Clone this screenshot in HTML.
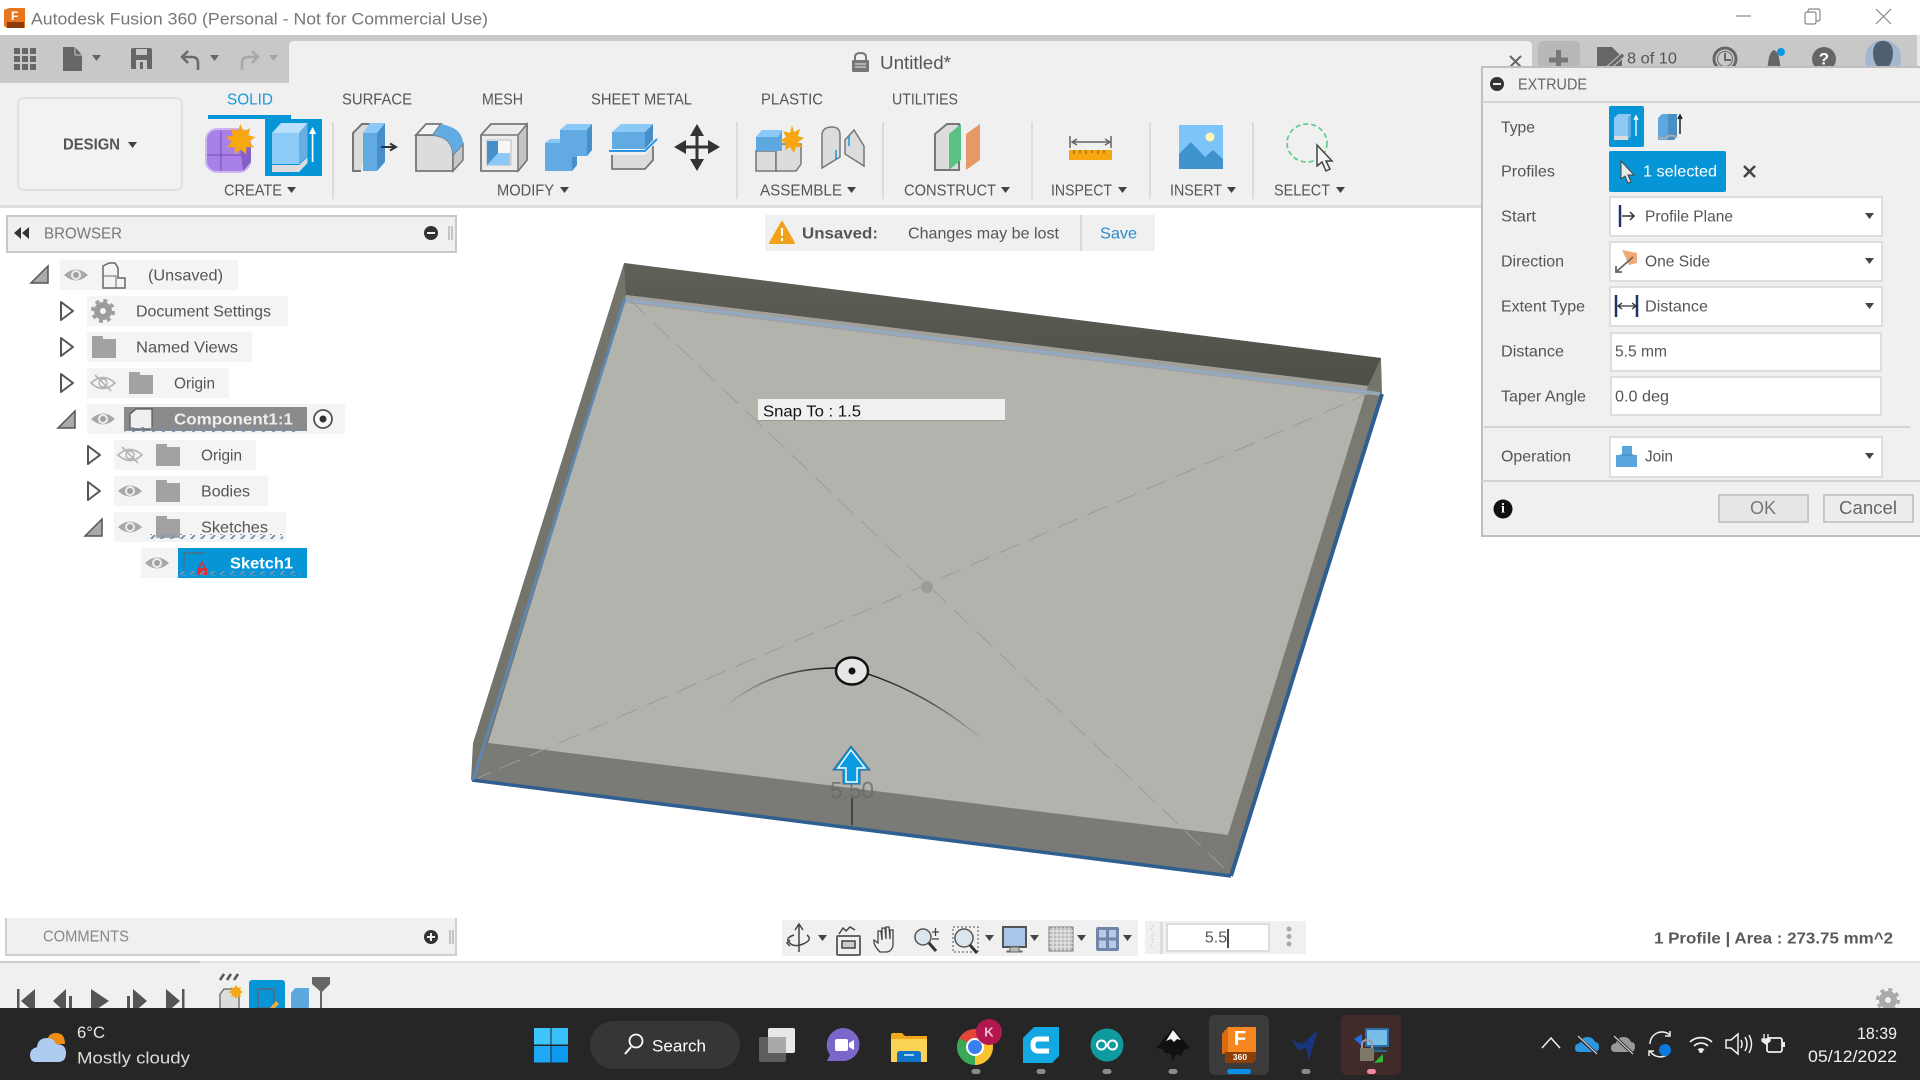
<!DOCTYPE html>
<html lang="en">
<head>
<meta charset="utf-8">
<title>Autodesk Fusion 360</title>
<style>
html,body{margin:0;padding:0;width:1920px;height:1080px;overflow:hidden;background:#fff}
svg{display:block;position:absolute;left:0;top:0;filter:blur(.35px)}
text{font-family:"Liberation Sans",Arial,sans-serif;dominant-baseline:central;fill:#555;font-size:16px;transform:translateY(1px)}
.r{fill:#555}
.w{fill:#fff}
.row{fill:#f4f4f4}
.div{fill:#dcdcdc}
.dd{fill:#fff;stroke:#dedede;stroke-width:2}
.cr{fill:#444}
</style>
</head>
<body>
<svg width="1920" height="1080" viewBox="0 0 1920 1080" xmlns="http://www.w3.org/2000/svg">
<defs>
<path id="caret" d="M0 0h9l-4.500 6z"/>
<g id="eye"><path d="M-12 0Q0-11 12 0Q0 11-12 0z" fill="#a8a8a8"/><circle r="5" fill="#eee"/><circle r="3" fill="#a0a0a0"/></g>
<g id="eyeoff"><path d="M-12 0Q0-11 12 0Q0 11-12 0z" fill="none" stroke="#b4b4b4" stroke-width="1.600"/><circle r="4" fill="none" stroke="#b4b4b4" stroke-width="1.500"/><path d="M-8-8L8 8" stroke="#b4b4b4" stroke-width="1.600"/></g>
<path id="folder" d="M0 0h11v3h13v19H0z" fill="#a2a2a2"/>
<path id="chev" d="M1 1L13 10L1 19z" fill="#fafafa" stroke="#555" stroke-width="2" stroke-linejoin="round"/>
<g id="tri"><path d="M0 17L17 0V17z" fill="#aaa" stroke="#555" stroke-width="1.500"/></g>
<linearGradient id="back" x1="0" y1="0" x2="0" y2="1"><stop offset="0" stop-color="#605f58"/><stop offset="1" stop-color="#4f4e47"/></linearGradient>
<linearGradient id="arcL" gradientUnits="userSpaceOnUse" x1="725" y1="0" x2="836" y2="0"><stop offset="0" stop-color="#222" stop-opacity="0"/><stop offset=".5" stop-color="#222" stop-opacity=".6"/><stop offset="1" stop-color="#111"/></linearGradient>
<linearGradient id="arcR" gradientUnits="userSpaceOnUse" x1="868" y1="0" x2="983" y2="0"><stop offset="0" stop-color="#111"/><stop offset=".55" stop-color="#222" stop-opacity=".7"/><stop offset="1" stop-color="#222" stop-opacity="0"/></linearGradient>
<pattern id="sq" width="10" height="5" patternUnits="userSpaceOnUse"><path d="M0 5L5 0" stroke="#7792b0" stroke-width="2"/></pattern>
<clipPath id="tb"><rect x="0" y="0" width="1920" height="1008"/></clipPath>
<clipPath id="top"><rect x="1480" y="35" width="440" height="31"/></clipPath>
</defs>

<!-- title bar -->
<rect width="1920" height="35" fill="#fff"/>
<path d="M4 10L9 8h16v20H7l-3-2z" fill="#e8761f"/><rect x="7" y="22" width="17" height="6" fill="#8a3d0e"/><text x="11" y="15" class="w" style="font-size:12px;font-weight:bold">F</text>
<text x="31" y="18" fill="#777" style="fill:#777;font-size:17px" textLength="457" lengthAdjust="spacingAndGlyphs">Autodesk Fusion 360 (Personal - Not for Commercial Use)</text>
<path d="M1736 16h15" stroke="#888" stroke-width="1.200"/>
<rect x="1805" y="12" width="11" height="12" rx="2" fill="none" stroke="#888" stroke-width="1.200"/><path d="M1808 12v-1q0-2 2-2h8q2 0 2 2v8q0 2-2 2h-2" fill="none" stroke="#888" stroke-width="1.200"/>
<path d="M1876 9l15 15M1891 9l-15 15" stroke="#888" stroke-width="1.200"/>

<!-- app bar -->
<rect y="35" width="1920" height="48" fill="#c8c8c8"/>
<rect x="1917" y="35" width="3" height="48" fill="#e8e8e8"/>
<path d="M289 83V46q0-5 5-5h1233q5 0 5 5v37z" fill="#f0f0f0"/>
<g fill="#666">
<rect x="14" y="48" width="6" height="6"/><rect x="22" y="48" width="6" height="6"/><rect x="30" y="48" width="6" height="6"/>
<rect x="14" y="56" width="6" height="6"/><rect x="22" y="56" width="6" height="6"/><rect x="30" y="56" width="6" height="6"/>
<rect x="14" y="64" width="6" height="6"/><rect x="22" y="64" width="6" height="6"/><rect x="30" y="64" width="6" height="6"/>
<path d="M63 47h12l7 8v16H63z"/><use href="#caret" x="92" y="55"/>
<path d="M131 50q0-2 2-2h17q2 0 2 2v19h-21z"/>
<use href="#caret" x="210" y="55"/>
</g>
<path d="M75 47v8h7" fill="none" stroke="#c8c8c8" stroke-width="1"/>
<rect x="136" y="49" width="11" height="6" fill="#c8c8c8"/><rect x="136" y="60" width="11" height="9" fill="#c8c8c8"/><rect x="140" y="62" width="3" height="7" fill="#666"/>
<path d="M198 70v-7q0-6-6-6h-8M188 51l-6 6 6 6" fill="none" stroke="#6a6a6a" stroke-width="2.500"/>
<path d="M242 70v-7q0-6 6-6h8M252 51l6 6-6 6" fill="none" stroke="#a8a8a8" stroke-width="2.500"/>
<use href="#caret" x="269" y="55" fill="#a4a4a4"/>

<!-- doc title -->
<path d="M855 61v-4q0-4 5.500-4t5.500 4v4" fill="none" stroke="#777" stroke-width="2"/><rect x="852" y="60" width="17" height="12" rx="1" fill="#777"/><path d="M855 64h11M855 67h11" stroke="#eee"/>
<text x="880" y="62" style="font-size:18px;fill:#555" textLength="71" lengthAdjust="spacingAndGlyphs">Untitled*</text>
<path d="M1510 56l11 11M1521 56l-11 11" stroke="#666" stroke-width="2"/>
<g clip-path="url(#top)">
<rect x="1538" y="41" width="42" height="30" rx="5" fill="#b8b8b8"/><path d="M1549 60h19M1558.500 50v20" stroke="#777" stroke-width="5"/>
<path d="M1597 47h15l10 10v20h-25z" fill="#666"/><path d="M1604 69l18-16 3 3-18 16z" fill="#666" stroke="#c8c8c8"/>
<text x="1627" y="58" style="font-size:16px" textLength="50" lengthAdjust="spacingAndGlyphs">8 of 10</text>
<circle cx="1725" cy="59" r="11" fill="#c8c8c8" stroke="#666" stroke-width="3"/><circle cx="1725" cy="59" r="7.500" fill="none" stroke="#666" stroke-width="1"/><path d="M1725 53v7h6" fill="none" stroke="#666" stroke-width="2"/>
<path d="M1764 72q3-3 4-8 1-12 6-14 5 2 6 14 1 5 4 8z" fill="#666"/><circle cx="1781" cy="52" r="4" fill="#0b97e0"/>
<circle cx="1824" cy="59" r="12" fill="#666"/><text x="1824" y="58" text-anchor="middle" class="w" style="font-size:17px;font-weight:bold">?</text>
<circle cx="1883" cy="58" r="18" fill="#a3b6cf"/><path d="M1873 52q1-11 10-11t10 11q0 10-5 15h-10q-5-5-5-15z" fill="#505f70"/>
</g>

<!-- ribbon -->
<rect y="83" width="1920" height="122" fill="#f0f0f0"/>
<rect y="205" width="1920" height="3" fill="#dedede"/>
<rect x="18" y="98" width="164" height="92" rx="6" fill="#f2f2f2" stroke="#e0e0e0" stroke-width="2"/>
<text x="63" y="144" style="font-size:16px;font-weight:bold;fill:#555" textLength="57" lengthAdjust="spacingAndGlyphs">DESIGN</text><use href="#caret" x="128" y="142" class="cr"/>
<text x="227" y="99" style="font-size:15.500px;fill:#1a9ad8" textLength="46" lengthAdjust="spacingAndGlyphs">SOLID</text>
<text x="342" y="99" style="font-size:15.500px" textLength="70" lengthAdjust="spacingAndGlyphs">SURFACE</text>
<text x="482" y="99" style="font-size:15.500px" textLength="41" lengthAdjust="spacingAndGlyphs">MESH</text>
<text x="591" y="99" style="font-size:15.500px" textLength="101" lengthAdjust="spacingAndGlyphs">SHEET METAL</text>
<text x="761" y="99" style="font-size:15.500px" textLength="62" lengthAdjust="spacingAndGlyphs">PLASTIC</text>
<text x="892" y="99" style="font-size:15.500px" textLength="66" lengthAdjust="spacingAndGlyphs">UTILITIES</text>
<rect x="208" y="115" width="83" height="4" fill="#0696d7"/>
<rect x="265" y="119" width="57" height="57" fill="#0696d7"/>

<!-- create solid purple -->
<rect x="206" y="129" width="44" height="43" rx="11" fill="#a97fe8" stroke="#cfb6f3" stroke-width="2"/>
<path d="M207 155h36M221 131v40" stroke="#7a55c0" stroke-width="1.200"/><path d="M240 147l11-5v20l-8 9z" fill="#8560c8"/>
<path d="M240.500 124l2.800 7.200 7-3-2.200 7.300 7.400 1.500-6.200 4.500 4.800 6-7.600-.5-.4 7.500-5.600-5-5.600 5-.4-7.500-7.600.5 4.800-6-6.200-4.500 7.400-1.500-2.200-7.300 7 3z" fill="#f7a80f"/>
<!-- extrude -->
<path d="M272 133L281 123H307.500L299 133z" fill="#b8dffb"/><rect x="272" y="133" width="27" height="31" fill="#8ccbf8"/><path d="M299 133L307.500 123V156L299 164z" fill="#68aee3"/>
<path d="M272 165H299L307.500 157V163L299 172H272z" fill="#dcdcdc"/>
<path d="M312.600 162V128" stroke="#fff" stroke-width="1.700"/><path d="M309 134l3.600-7 3.600 7z" fill="#fff"/>
<text x="224" y="190" style="font-size:15.500px" textLength="58" lengthAdjust="spacingAndGlyphs">CREATE</text><use href="#caret" x="287" y="187" class="cr"/>
<rect x="332" y="122" width="2" height="77" class="div"/>

<!-- modify icons -->
<path d="M361 171H353V133L362 124H372" fill="#dcdcdc" stroke="#777" stroke-width="2"/>
<rect x="363" y="133" width="14" height="38" fill="#62aae2"/><path d="M363 133L370 123H385L377 133z" fill="#8cc9f6"/><path d="M377 133L385 123V162L377 171z" fill="#4590cb"/>
<path d="M381 147H394M390 143.500L396 147L390 150.500" fill="none" stroke="#333" stroke-width="2"/>
<path d="M416 171V135H433Q453 137 453 155V171z" fill="#dcdcdc" stroke="#777" stroke-width="1.800"/>
<path d="M416 135L426 124H441L433 135z" fill="#f4f4f4" stroke="#777" stroke-width="1.800"/>
<path d="M453 171V155L463 144V160z" fill="#c8c8c8" stroke="#777" stroke-width="1.500"/>
<path d="M433 135L441 124Q463 128 463 144L453 155Q452 137 433 135z" fill="#62aae2"/>
<path d="M481 171V135L491 124H527V160L518 171z" fill="#ececec" stroke="#777" stroke-width="1.800"/>
<path d="M518 135L527 124V160L518 171z" fill="#c4c4c4" stroke="#777" stroke-width="1.500"/><path d="M481 135H518" stroke="#777" stroke-width="1.500"/>
<rect x="487" y="140" width="24" height="25" fill="#f7f7f7" stroke="#bbb"/><rect x="487" y="141" width="11" height="24" fill="#4590cb"/><path d="M487 165L498 153H510V165z" fill="#8cc9f6"/>
<path d="M545 143L550 139H560V130L567 124H592V150L587 156H577V165L572 171H545z" fill="#62aae2"/>
<path d="M545 143L550 139H560V143z" fill="#8cc9f6"/><path d="M560 130L567 124H592L587 130z" fill="#8cc9f6"/><path d="M587 130L592 124V150L587 156z" fill="#4590cb"/><path d="M572 157H577V165L572 171z" fill="#4590cb"/>
<rect x="612" y="132" width="33" height="17" fill="#62aae2"/><path d="M612 132L621 124H653L645 132z" fill="#8cc9f6"/><path d="M645 132L653 124V140L645 149z" fill="#4590cb"/>
<path d="M609 151H645L657 139" fill="none" stroke="#2a96e6" stroke-width="2"/>
<path d="M612 155V169H645L653 160V146L645 155z" fill="#dcdcdc"/><path d="M612 155V169H645L653 160V146" fill="none" stroke="#777" stroke-width="1.800"/>
<path d="M697 130V165M680 147H714" stroke="#333" stroke-width="3"/>
<path d="M697 124L704 136H690zM697 171L704 159H690zM674 147L686 140V154zM720 147L708 140V154z" fill="#333"/>
<text x="497" y="190" style="font-size:15.500px" textLength="57" lengthAdjust="spacingAndGlyphs">MODIFY</text><use href="#caret" x="560" y="187" class="cr"/>
<rect x="736" y="122" width="2" height="77" class="div"/>

<!-- assemble -->
<path d="M756 171v-20h20v20z" fill="#dcdcdc" stroke="#777" stroke-width="1.500"/><path d="M776 171v-20l6-7h19v20l-5 7z" fill="#dcdcdc" stroke="#777" stroke-width="1.500"/>
<path d="M756 137l6-7h20v21h-26z" fill="#5ea8e0"/><path d="M756 137l6-7h20l-4 7z" fill="#8cc9f6"/>
<path d="M792 125l2 7 6-3-2 7 6 2-6 4 5 5-7 0-2 6-4-6-5 3 1-7-6-2 6-4-3-6 7 2z" fill="#f5a611"/>
<path d="M822 168v-34q1-7 10-7 8 0 8 8v22z" fill="#dcdcdc" stroke="#777" stroke-width="1.500"/><path d="M845 140l9-10 10 16v20l-19-12z" fill="#dcdcdc" stroke="#777" stroke-width="1.500"/><path d="M836 150v10M849 136v10" stroke="#1f96dc" stroke-width="1.500"/>
<rect x="882" y="122" width="2" height="77" class="div"/>
<text x="760" y="190" style="font-size:15.500px" textLength="82" lengthAdjust="spacingAndGlyphs">ASSEMBLE</text><use href="#caret" x="847" y="187" class="cr"/>

<!-- construct -->
<path d="M935 170v-36l12-10h12v46z" fill="#dcdcdc" stroke="#777" stroke-width="2"/><path d="M949 170v-36l12-10v36z" fill="#58c282"/><path d="M966 170v-36l14-10v36z" fill="#e39a66"/>
<text x="904" y="190" style="font-size:15.500px" textLength="92" lengthAdjust="spacingAndGlyphs">CONSTRUCT</text><use href="#caret" x="1001" y="187" class="cr"/>
<rect x="1031" y="122" width="2" height="77" class="div"/>

<!-- inspect -->
<path d="M1070 136v12M1111 136v12M1072 142h38M1077 139l-5 3 5 3M1105 139l5 3-5 3" fill="none" stroke="#666" stroke-width="1.500"/>
<rect x="1069" y="150" width="43" height="10" fill="#f5a611"/><path d="M1074 150v4M1080 150v3M1086 150v4M1092 150v3M1098 150v4M1104 150v3" stroke="#7a5a10" stroke-width="1"/>
<text x="1051" y="190" style="font-size:15.500px" textLength="61" lengthAdjust="spacingAndGlyphs">INSPECT</text><use href="#caret" x="1118" y="187" class="cr"/>
<rect x="1149" y="122" width="2" height="77" class="div"/>

<!-- insert -->
<rect x="1179" y="125" width="44" height="44" fill="#7dc4fb"/><circle cx="1210" cy="137" r="4.500" fill="#fbf6b2"/><path d="M1179 154l12-12 14 15 8-7 10 9v10h-44z" fill="#3e93cc"/>
<text x="1170" y="190" style="font-size:15.500px" textLength="52" lengthAdjust="spacingAndGlyphs">INSERT</text><use href="#caret" x="1227" y="187" class="cr"/>
<rect x="1252" y="122" width="2" height="77" class="div"/>

<!-- select -->
<ellipse cx="1307" cy="143" rx="20" ry="19" fill="none" stroke="#5fcc8a" stroke-width="1.700" stroke-dasharray="5 3"/>
<path d="M1317 145v21l5-4 4 9 4-2-4-8h6z" fill="#f4f4f4" stroke="#444" stroke-width="1.500"/>
<text x="1274" y="190" style="font-size:15.500px" textLength="56" lengthAdjust="spacingAndGlyphs">SELECT</text><use href="#caret" x="1336" y="187" class="cr"/>

<!-- browser -->
<rect x="7" y="216" width="449" height="36" fill="#f0f0f0" stroke="#c8c8c8" stroke-width="2"/>
<path d="M21 227v12l-7-6zM29 227v12l-7-6z" fill="#333"/>
<text x="44" y="233" style="font-size:16px;fill:#777" textLength="78" lengthAdjust="spacingAndGlyphs">BROWSER</text>
<circle cx="431" cy="233" r="7" fill="#333"/><rect x="427" y="232" width="8" height="2" fill="#f0f0f0"/>
<path d="M449 226v14M452 226v14" stroke="#999"/>

<rect x="60" y="260" width="178" height="30" class="row"/>
<use href="#tri" x="31" y="266"/><use href="#eye" x="76" y="275"/>
<path d="M103 266l6-3h6l3 5v10h7v10h-22z" fill="#f4f4f4" stroke="#666" stroke-width="1.500"/><path d="M103 276h13v12" fill="none" stroke="#666" stroke-width="1"/>
<text x="148" y="275" textLength="75" lengthAdjust="spacingAndGlyphs">(Unsaved)</text>

<rect x="87" y="296" width="201" height="30" class="row"/>
<use href="#chev" x="60" y="301"/>
<circle cx="103" cy="311" r="9" fill="#9c9c9c"/><circle cx="103" cy="311" r="3" fill="#f4f4f4"/><circle cx="103" cy="311" r="10.500" fill="none" stroke="#9c9c9c" stroke-width="3" stroke-dasharray="4 4.250"/>
<text x="136" y="311" textLength="135" lengthAdjust="spacingAndGlyphs">Document Settings</text>

<rect x="87" y="332" width="165" height="30" class="row"/>
<use href="#chev" x="60" y="337"/><use href="#folder" x="92" y="336"/>
<text x="136" y="347" textLength="102" lengthAdjust="spacingAndGlyphs">Named Views</text>

<rect x="87" y="368" width="142" height="30" class="row"/>
<use href="#chev" x="60" y="373"/><use href="#eyeoff" x="103" y="383"/><use href="#folder" x="129" y="372"/>
<text x="174" y="383" textLength="41" lengthAdjust="spacingAndGlyphs">Origin</text>

<rect x="87" y="404" width="258" height="30" class="row"/>
<use href="#tri" x="58" y="411"/><use href="#eye" x="103" y="419"/>
<rect x="124" y="407" width="183" height="24" fill="#8b8b8b"/>
<path d="M130 414l6-5h16v20h-22z" fill="#efefef" stroke="#555" stroke-width="1.200"/>
<text x="174" y="419" class="w" style="font-weight:bold;fill:#eee" textLength="119" lengthAdjust="spacingAndGlyphs">Component1:1</text>
<rect x="124" y="427" width="177" height="5" fill="url(#sq)"/>
<circle cx="323" cy="419" r="9" fill="#fafafa" stroke="#555" stroke-width="1.800"/><circle cx="323" cy="419" r="3.500" fill="#333"/>

<rect x="114" y="440" width="142" height="30" class="row"/>
<use href="#chev" x="87" y="445"/><use href="#eyeoff" x="130" y="455"/><use href="#folder" x="156" y="444"/>
<text x="201" y="455" textLength="41" lengthAdjust="spacingAndGlyphs">Origin</text>

<rect x="114" y="476" width="154" height="30" class="row"/>
<use href="#chev" x="87" y="481"/><use href="#eye" x="130" y="491"/><use href="#folder" x="156" y="480"/>
<text x="201" y="491" textLength="49" lengthAdjust="spacingAndGlyphs">Bodies</text>

<rect x="114" y="512" width="172" height="30" class="row"/>
<use href="#tri" x="85" y="519"/><use href="#eye" x="130" y="527"/><use href="#folder" x="156" y="516"/>
<text x="201" y="527" textLength="67" lengthAdjust="spacingAndGlyphs">Sketches</text>
<rect x="150" y="534" width="133" height="5" fill="url(#sq)"/>

<rect x="141" y="548" width="166" height="30" class="row"/>
<use href="#eye" x="157" y="563"/>
<rect x="178" y="548" width="129" height="30" fill="#0696d7"/>
<path d="M184 553h22M184 553v20" stroke="#4a6a80" stroke-width="1.500" stroke-dasharray="3 1"/><path d="M197 568h10v7h-10z" fill="#d8303a"/><path d="M199 568l3-6 3 6" fill="none" stroke="#d8303a" stroke-width="1.500"/>
<text x="230" y="563" class="w" style="font-weight:bold" textLength="63" lengthAdjust="spacingAndGlyphs">Sketch1</text>
<rect x="178" y="571" width="123" height="5" fill="url(#sq)"/>

<!-- unsaved banner -->
<rect x="765" y="215" width="390" height="36" fill="#f0f0f0"/>
<path d="M782 222l12 21h-24z" fill="#f0a31a" stroke="#f0a31a" stroke-width="2" stroke-linejoin="round"/><path d="M782 228v8M782 238v3" stroke="#fff" stroke-width="2"/>
<text x="802" y="233" style="font-weight:bold" textLength="76" lengthAdjust="spacingAndGlyphs">Unsaved:</text>
<text x="908" y="233" textLength="151" lengthAdjust="spacingAndGlyphs">Changes may be lost</text>
<rect x="1080" y="215" width="2" height="36" fill="#d8d8d8"/>
<text x="1100" y="233" style="fill:#2a8ac8" textLength="37" lengthAdjust="spacingAndGlyphs">Save</text>

<!-- 3D model -->
<path d="M624 263L1381 358L1382 393L1231 876L471 780L473 743z" fill="#75746c"/>
<path d="M624 263L1381 358L1368 386L626 295z" fill="url(#back)"/>
<path d="M626 295L1368 386L1228 835L488 743z" fill="#b3b3ad"/>
<path d="M626 295L1368 386L1366 395L626 303z" fill="#a19f99"/>
<path d="M488 743L1228 835L1230 876L472 780z" fill="#7a7b76"/>
<path d="M1228 835L1368 386L1382 393L1231 876z" fill="#7b7a72"/>
<path d="M626 300L1380 394" stroke="#93a9c1" stroke-width="3.500"/>
<path d="M472 780L1231 876" stroke="#2f5e90" stroke-width="3.500"/>
<path d="M1231 876L1382 394" stroke="#2f5e90" stroke-width="4"/>
<path d="M473 780L625 298" stroke="#5e87b0" stroke-width="3"/>
<g stroke="#9c9c96" stroke-width="1" stroke-dasharray="22 10" fill="none">
<path d="M630 300L1228 872"/><path d="M1372 392L478 778"/>
</g>
<circle cx="927" cy="587" r="6" fill="#9c9c96"/>
<path d="M725 707Q770 668 836 668" fill="none" stroke="url(#arcL)" stroke-width="1.400"/>
<path d="M868 674Q930 695 983 740" fill="none" stroke="url(#arcR)" stroke-width="1.400"/>
<ellipse cx="852" cy="671" rx="16" ry="13.500" fill="#e6e6e6" stroke="#111" stroke-width="2.500"/><circle cx="852" cy="671" r="3.500" fill="#111"/>
<text x="852" y="790" text-anchor="middle" style="font-size:24px;fill:#666;opacity:.75" textLength="44" lengthAdjust="spacingAndGlyphs">5.50</text>
<path d="M852 798v27" stroke="#222" stroke-width="1.200"/>
<path d="M851 746L870 770H860V784H843V770H833z" fill="#0a9ae2" stroke="#3c6a92" stroke-width="1"/>
<path d="M851 750L865 768H857V782H846V768H838z" fill="#0a9ae2" stroke="#fff" stroke-width="1.400"/>
<rect x="758" y="399" width="247" height="22" fill="#f0f0f0"/><rect x="758" y="420" width="247" height="1" fill="#999"/>
<text x="763" y="411" style="fill:#111" textLength="98" lengthAdjust="spacingAndGlyphs">Snap To : 1.5</text>

<!-- extrude panel -->
<rect x="1482" y="67" width="440" height="469" fill="#f0f0f0" stroke="#bfbfbf" stroke-width="2"/>
<rect x="1482" y="101" width="438" height="2" fill="#d4d4d4"/>
<circle cx="1497" cy="84" r="7" fill="#333"/><rect x="1493" y="83" width="8" height="2" fill="#f0f0f0"/>
<text x="1518" y="84" style="fill:#666" textLength="69" lengthAdjust="spacingAndGlyphs">EXTRUDE</text>
<text x="1501" y="127" textLength="34" lengthAdjust="spacingAndGlyphs">Type</text>
<text x="1501" y="171" textLength="54" lengthAdjust="spacingAndGlyphs">Profiles</text>
<text x="1501" y="216" textLength="35" lengthAdjust="spacingAndGlyphs">Start</text>
<text x="1501" y="261" textLength="63" lengthAdjust="spacingAndGlyphs">Direction</text>
<text x="1501" y="306" textLength="84" lengthAdjust="spacingAndGlyphs">Extent Type</text>
<text x="1501" y="351" textLength="63" lengthAdjust="spacingAndGlyphs">Distance</text>
<text x="1501" y="396" textLength="85" lengthAdjust="spacingAndGlyphs">Taper Angle</text>
<text x="1501" y="456" textLength="70" lengthAdjust="spacingAndGlyphs">Operation</text>

<rect x="1609" y="106" width="35" height="41" rx="2" fill="#0696d7"/>
<path d="M1614 118l4-4h13v22l-3 4h-14z" fill="#8cc9f6"/><path d="M1628 118l3-4v22l-3 4z" fill="#5ea8e0"/><path d="M1614 136h14v4h-14z" fill="#dcdcdc"/><path d="M1636 136v-19M1634 120l2-4 2 4" fill="none" stroke="#fff" stroke-width="1.300"/>
<path d="M1658 118l4-4h15v22l-3 4h-16z" fill="#5ea8e0"/><path d="M1668 114h9v22l-3 4h-6z" fill="#4a8ec6"/><path d="M1658 137q5 3 9 0t10 0" fill="none" stroke="#aaa" stroke-width="2"/><path d="M1680 134v-19M1678 119l2-4 2 4" fill="none" stroke="#222" stroke-width="1.500"/>
<rect x="1609" y="151" width="117" height="41" rx="2" fill="#0696d7"/>
<path d="M1621 161v18l4-3 3 7 3-1-3-7h6z" fill="#e8e8e8" stroke="#444"/>
<text x="1643" y="171" class="w" style="font-size:16px" textLength="74" lengthAdjust="spacingAndGlyphs">1 selected</text>
<path d="M1744 166l11 11M1755 166l-11 11" stroke="#444" stroke-width="2.500"/>

<rect x="1610" y="197" width="272" height="39" class="dd"/>
<path d="M1620 205v22" stroke="#1c3564" stroke-width="2.500"/><path d="M1622 216h11M1630 212l4 4-4 4" fill="none" stroke="#333" stroke-width="1.500"/>
<text x="1645" y="216" textLength="88" lengthAdjust="spacingAndGlyphs">Profile Plane</text><use href="#caret" x="1865" y="213" class="cr"/>

<rect x="1610" y="242" width="272" height="39" class="dd"/>
<path d="M1622 250l15 3v10l-8 2z" fill="#f0aa78" /><path d="M1616 272l17-15M1616 266v6h6" fill="none" stroke="#666" stroke-width="1.800"/>
<text x="1645" y="261" textLength="65" lengthAdjust="spacingAndGlyphs">One Side</text><use href="#caret" x="1865" y="258" class="cr"/>

<rect x="1610" y="287" width="272" height="39" class="dd"/>
<path d="M1616 295v22M1637 295v22" stroke="#1c3564" stroke-width="2.500"/><path d="M1618 306h18M1622 303l-4 3 4 3M1632 303l4 3-4 3" fill="none" stroke="#333" stroke-width="1.300"/>
<text x="1645" y="306" textLength="63" lengthAdjust="spacingAndGlyphs">Distance</text><use href="#caret" x="1865" y="303" class="cr"/>

<rect x="1611" y="333" width="270" height="38" fill="#fff" stroke="#dedede" stroke-width="2"/>
<text x="1615" y="351" textLength="52" lengthAdjust="spacingAndGlyphs">5.5 mm</text>
<rect x="1611" y="377" width="270" height="38" fill="#fff" stroke="#dedede" stroke-width="2"/>
<text x="1615" y="396" textLength="54" lengthAdjust="spacingAndGlyphs">0.0 deg</text>
<rect x="1484" y="426" width="426" height="2" fill="#d4d4d4"/>

<rect x="1610" y="437" width="272" height="40" class="dd"/>
<path d="M1622 446h10v9h5v12h-21v-12h6z" fill="#5aa5de"/><path d="M1620 455h14" stroke="#3f86c2"/>
<text x="1645" y="456" textLength="28" lengthAdjust="spacingAndGlyphs">Join</text><use href="#caret" x="1865" y="453" class="cr"/>

<rect x="1482" y="480" width="438" height="2" fill="#d4d4d4"/>
<circle cx="1503" cy="509" r="9.500" fill="#111"/><text x="1503" y="508" text-anchor="middle" class="w" style="font-size:14px;font-weight:bold;font-family:'Liberation Serif',serif">i</text>
<rect x="1719" y="495" width="89" height="27" fill="#e6e6e6" stroke="#c8c8c8" stroke-width="2"/>
<text x="1763" y="507" text-anchor="middle" style="font-size:18px;fill:#777">OK</text>
<rect x="1824" y="495" width="89" height="27" fill="#ededed" stroke="#c8c8c8" stroke-width="2"/>
<text x="1868" y="507" text-anchor="middle" style="font-size:18px;fill:#666" textLength="58" lengthAdjust="spacingAndGlyphs">Cancel</text>

<!-- comments -->
<rect x="6" y="918" width="450" height="38" fill="#f0f0f0"/><path d="M6 918V955H456V918" fill="none" stroke="#d0d0d0" stroke-width="2"/>
<text x="43" y="936" style="font-size:15.500px;fill:#888" textLength="86" lengthAdjust="spacingAndGlyphs">COMMENTS</text>
<circle cx="431" cy="937" r="7" fill="#333"/><path d="M427 937h8M431 933v8" stroke="#f0f0f0" stroke-width="2"/>
<path d="M450 930v14M453 930v14" stroke="#999"/>

<!-- nav bar -->
<rect x="782" y="920" width="356" height="36" fill="#f0f0f0"/>
<g fill="none" stroke="#444" stroke-width="1.500">
<path d="M799 924v28M795 930l4-6 4 6"/><path d="M807 935q6 5-4 9t-14-2q-4-4 5-7M790 940l-3 3 3 3"/>
<rect x="837" y="936" width="23" height="19" rx="1" stroke="#666" stroke-width="2"/><rect x="842" y="941" width="13" height="7" fill="#ccc"/><path d="M839 934l4-6 3 3 4-4 5 3"/>
<path d="M880 952q-7-7-6-12l4 3v-12l3 0 1 9v-12h3l1 11v-12h3l1 12v-9h3v16q-2 6-7 6z" stroke-width="1.300"/>
<circle cx="923" cy="937" r="8" fill="#dce6ee" stroke="#555"/><path d="M929 943l7 8" stroke="#333" stroke-width="3"/><path d="M932 932h7M935.500 928v8M932 939h7" stroke-width="1.300"/>
<path d="M953 927h25v25h-25z" stroke="#555" stroke-width="1" stroke-dasharray="2 2"/><circle cx="964" cy="938" r="9" fill="#dce6ee" stroke="#555"/><path d="M970 945l7 8" stroke="#333" stroke-width="3"/>
</g>
<rect x="1003" y="927" width="23" height="20" fill="#a9c6e8" stroke="#555" stroke-width="2"/><path d="M1010 947h9v4h3v1h-15v-1h3z" fill="#bbb" stroke="#666"/>
<rect x="1049" y="927" width="24" height="24" fill="#bbb" stroke="#777"/>
<path d="M1053 927v24M1057 927v24M1061 927v24M1065 927v24M1069 927v24M1049 931h24M1049 935h24M1049 939h24M1049 943h24M1049 947h24" stroke="#eee" stroke-width="1"/>
<rect x="1096" y="927" width="23" height="24" rx="2" fill="#6f86a8"/>
<rect x="1099" y="930" width="7" height="7.500" fill="#b9cbe4"/><rect x="1109" y="930" width="7" height="7.500" fill="#b9cbe4"/><rect x="1099" y="940.500" width="7" height="7.500" fill="#b9cbe4"/><rect x="1109" y="940.500" width="7" height="7.500" fill="#b9cbe4"/>
<g class="cr"><use href="#caret" x="818" y="935"/><use href="#caret" x="985" y="935"/><use href="#caret" x="1030" y="935"/><use href="#caret" x="1077" y="935"/><use href="#caret" x="1123" y="935"/></g>

<rect x="1145" y="921" width="161" height="33" fill="#f0f0f0"/>
<path d="M1153 925l-2 4 3 4-3 4 3 4-3 4 2 4" fill="none" stroke="#ccc" stroke-dasharray="2 2"/><rect x="1160" y="922" width="3" height="32" fill="#ddd"/>
<rect x="1167" y="924" width="102" height="27" fill="#fff" stroke="#dcdcdc" stroke-width="2"/>
<text x="1216" y="937" text-anchor="middle" style="font-size:16px">5.5</text><path d="M1228 929v19" stroke="#111" stroke-width="1.500"/>
<circle cx="1289" cy="929" r="2.500" fill="#aaa"/><circle cx="1289" cy="936.500" r="2.500" fill="#aaa"/><circle cx="1289" cy="944" r="2.500" fill="#aaa"/>

<text x="1654" y="938" style="font-weight:bold;font-size:16px;fill:#5a5a5a" textLength="239" lengthAdjust="spacingAndGlyphs">1 Profile | Area : 273.75 mm^2</text>

<!-- timeline -->
<rect y="963" width="1920" height="45" fill="#f0f0f0"/>
<rect y="961" width="1920" height="2" fill="#e2e2e2"/>
<rect y="961" width="200" height="2" fill="#cdcdcd"/>
<g clip-path="url(#tb)">
<g fill="#555">
<rect x="17" y="989" width="2.500" height="24"/><path d="M35 989v24l-14-12z"/>
<path d="M66 989v24l-13-12z"/><rect x="69" y="996" width="3" height="12"/>
<path d="M91 989l18 12-18 12z"/>
<rect x="127" y="996" width="3" height="12"/><path d="M133 989l14 12-14 12z"/>
<path d="M166 989l14 12-14 12z"/><rect x="182" y="989" width="2.500" height="24"/>
<path d="M220 980l4-6M227 980l4-6M234 980l4-6" stroke="#555" stroke-width="2.500"/>
</g>
<path d="M220 1012v-18l4-5h15v23z" fill="#dcdcdc" stroke="#777" stroke-width="1.500"/>
<path d="M236 985l2 3 3-1-1 3 3 2-3 2 1 3-3-1-2 3-2-3-3 1 1-3-3-2 3-2-1-3 3 1z" fill="#f5a611"/>
<rect x="249" y="980" width="36" height="34" rx="3" fill="#0696d7"/>
<rect x="258" y="989" width="16" height="19" fill="none" stroke="#46708e" stroke-width="2"/><path d="M270 1008l6-7 3 3-6 6z" fill="#f0b040"/>
<path d="M291 1012v-19l4-5h14v19l-4 5z" fill="#5ea8e0"/>
<path d="M312 977h18v7l-8 8-1-0-9-8z" fill="#666"/><rect x="320" y="990" width="2" height="20" fill="#666"/>
<circle cx="1888" cy="1000" r="9" fill="#aaa"/><circle cx="1888" cy="1000" r="3" fill="#f0f0f0"/><circle cx="1888" cy="1000" r="10.500" fill="none" stroke="#aaa" stroke-width="3" stroke-dasharray="4 4.250"/>
</g>

<!-- taskbar -->
<rect y="1008" width="1920" height="72" fill="#262626"/>
<path d="M47 1044q0-11 9-11t9 11z" fill="#ef8c12"/>
<path d="M36 1062q-6 0-6-7 0-6 7-8 1-9 10-9 7 0 9 6 10 0 10 9 0 9-8 9z" fill="#aecbf0"/>
<text x="77" y="1032" style="font-size:16.500px;fill:#e8e8e8" textLength="28" lengthAdjust="spacingAndGlyphs">6°C</text>
<text x="77" y="1057" style="font-size:17px;fill:#dcdcdc" textLength="113" lengthAdjust="spacingAndGlyphs">Mostly cloudy</text>
<rect x="534" y="1028" width="16.500" height="16.500" fill="#3dc6fb"/><rect x="551.500" y="1028" width="16.500" height="16.500" fill="#37c0fb"/><rect x="534" y="1046" width="16.500" height="16.500" fill="#1fa8f5"/><rect x="551.500" y="1046" width="16.500" height="16.500" fill="#0f98f0"/>
<rect x="590" y="1021" width="150" height="48" rx="24" fill="#363636"/>
<circle cx="636" cy="1041" r="6.500" fill="none" stroke="#fff" stroke-width="1.800"/><path d="M631 1047l-6 7" stroke="#fff" stroke-width="2"/>
<text x="652" y="1045" class="w" style="font-size:17px" textLength="54" lengthAdjust="spacingAndGlyphs">Search</text>
<rect x="759" y="1037" width="27" height="25" rx="2" fill="#5e5e5e"/><rect x="768" y="1028" width="27" height="25" rx="2" fill="#e8e8e8"/><rect x="768" y="1037" width="18" height="16" fill="#a9a9a9"/>
<path d="M843 1028a16.500 16.500 0 0 1 0 33h-16l3-6a17 17 0 0 1 13-27z" fill="#7b67c9"/><rect x="835" y="1039" width="13" height="12" rx="2" fill="#fff"/><path d="M849 1043l5-3v10l-5-3z" fill="#fff"/>
<path d="M891 1035q0-2 2-2h9l3 3h22v26h-36z" fill="#f3a81c"/><rect x="891" y="1039" width="36" height="23" fill="#fad355"/><path d="M897 1062v-8q0-3 3-3h18q3 0 3 3v8z" fill="#0f74c8"/><rect x="904" y="1054" width="10" height="2" fill="#9bd2f5"/>
<path d="M975 1047L959.400 1038A18 18 0 0 1 990.600 1038Z" fill="#e2463a"/><path d="M975 1047L990.600 1038A18 18 0 0 1 975 1065Z" fill="#f9c430"/><path d="M975 1047L975 1065A18 18 0 0 1 959.400 1038Z" fill="#3aa856"/>
<circle cx="975" cy="1047" r="9" fill="#fff"/><circle cx="975" cy="1047" r="7" fill="#3a7ff0"/>
<circle cx="989" cy="1032" r="13" fill="#b3174f"/><text x="989" y="1031" text-anchor="middle" style="font-size:13px;fill:#f4c0d0;font-weight:bold">K</text>
<path d="M1023 1038l11-11h25v29l-7 7h-29z" fill="#12a9e2"/><path d="M1049 1039h-11q-5 0-5 6t5 6h11" fill="none" stroke="#fff" stroke-width="5"/>
<circle cx="1107" cy="1045" r="16.500" fill="#0f9aa0"/><circle cx="1101.500" cy="1045" r="4.500" fill="none" stroke="#fff" stroke-width="2"/><circle cx="1112.500" cy="1045" r="4.500" fill="none" stroke="#fff" stroke-width="2"/>
<path d="M1173 1028l17 20-6 2-3 6-5-2-3 7-2-7-6-1-2-4-7-1z" fill="#101010"/><path d="M1173 1030l8 10-4-1-3 3-3-3-5 2z" fill="#f4f4f4"/>
<rect x="1209" y="1015" width="60" height="60" rx="6" fill="#3b3b3b"/>
<path d="M1222 1034l6-7h28v25h-34z" fill="#f58620"/><rect x="1228" y="1027" width="28" height="25" fill="#f58620"/>
<path d="M1222 1034l6-7v26l-6 1z" fill="#d86a10"/>
<path d="M1225 1052h31v7l-3 4h-28z" fill="#8c3f08"/>
<text x="1240" y="1038" text-anchor="middle" class="w" style="font-size:20px;font-weight:bold">F</text>
<text x="1240" y="1056" text-anchor="middle" class="w" style="font-size:8.500px;font-weight:bold">360</text>
<rect x="1227" y="1069" width="24" height="5" rx="2.500" fill="#0a8fe8"/>
<path d="M1292 1040l10 4 16-14-9 30-3-12-8 2z" fill="#17367e"/>
<rect x="1341" y="1015" width="60" height="60" rx="6" fill="#432a2a"/>
<rect x="1365" y="1028" width="24" height="19" fill="#2a6ea8"/><rect x="1367" y="1030" width="20" height="15" fill="#78bde8"/><rect x="1372" y="1047" width="10" height="3" fill="#1e4a70"/><rect x="1368" y="1050" width="19" height="2" fill="#2a6a80"/>
<path d="M1354 1039l8-5v12z" fill="#1a6ee0"/><path d="M1383 1062l-9 1 9-9z" fill="#26c030"/>
<path d="M1362 1049v-4q0-5 5-5t5 5v4" fill="none" stroke="#999" stroke-width="2"/><rect x="1360" y="1048" width="14" height="13" rx="1" fill="#7e7868"/>
<g fill="#8a8a8a"><rect x="971.500" y="1069" width="9" height="5" rx="2.500"/><rect x="1036.500" y="1069" width="9" height="5" rx="2.500"/><rect x="1102.500" y="1069" width="9" height="5" rx="2.500"/><rect x="1168.500" y="1069" width="9" height="5" rx="2.500"/><rect x="1301.500" y="1069" width="9" height="5" rx="2.500"/></g>
<rect x="1367" y="1069" width="9" height="5" rx="2.500" fill="#f08a9a"/>

<!-- tray -->
<path d="M1542 1048l9-10 9 10" fill="none" stroke="#eee" stroke-width="1.500"/>
<path d="M1579 1052q-4 0-4-4t5-5q1-6 8-6 5 0 7 5 4 0 4 5t-5 5z" fill="#2d96e0"/><path d="M1578 1037l19 17" stroke="#262626" stroke-width="3"/><path d="M1578 1036l19 18" stroke="#ddd" stroke-width="1.200"/>
<path d="M1615 1052q-4 0-4-4t5-5q1-6 8-6 5 0 7 5 4 0 4 5t-5 5z" fill="#999"/><path d="M1614 1036l19 18" stroke="#262626" stroke-width="3"/><path d="M1614 1036l19 18" stroke="#ddd" stroke-width="1.200"/>
<path d="M1650 1044a12 12 0 0 1 20-9M1670 1031v5h-5M1668 1054a12 12 0 0 1-18-3M1649 1056v-5h5" fill="none" stroke="#eee" stroke-width="1.500"/><circle cx="1665" cy="1050" r="6" fill="#0a78dc"/>
<path d="M1690 1042a16 16 0 0 1 22 0M1694 1046a10 10 0 0 1 14 0M1698 1050a5 5 0 0 1 6 0" fill="none" stroke="#eee" stroke-width="1.700"/><circle cx="1701" cy="1051" r="2" fill="#eee"/>
<path d="M1726 1040h5l7-6v20l-7-6h-5z" fill="none" stroke="#eee" stroke-width="1.500"/><path d="M1741 1040q2 4 0 8M1745 1037q4 7 0 14M1749 1035q5 9 0 18" fill="none" stroke="#eee" stroke-width="1.500"/>
<rect x="1767" y="1038" width="15" height="14" rx="2" fill="none" stroke="#eee" stroke-width="1.800"/><rect x="1782" y="1042" width="3" height="5" fill="#eee"/>
<path d="M1764 1034v5M1768 1034v5M1762 1039h8v2l-4 3-4-3z" fill="#eee" stroke="#eee" stroke-width="1.300"/>
<text x="1897" y="1033" text-anchor="end" class="w" style="font-size:16.500px;fill:#f2f2f2" textLength="40" lengthAdjust="spacingAndGlyphs">18:39</text>
<text x="1897" y="1056" text-anchor="end" class="w" style="font-size:16.500px;fill:#f2f2f2" textLength="89" lengthAdjust="spacingAndGlyphs">05/12/2022</text>
</svg>
</body>
</html>
